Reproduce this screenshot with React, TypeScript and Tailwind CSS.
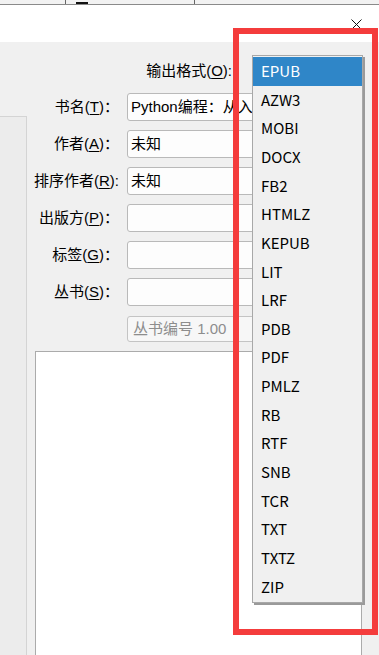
import React from 'react';

// --- DATA ---
const formats = [
  'EPUB', 'AZW3', 'MOBI', 'DOCX', 'FB2', 'HTMLZ', 'KEPUB', 'LIT', 'LRF', 'PDB',
  'PDF', 'PMLZ', 'RB', 'RTF', 'SNB', 'TCR', 'TXT', 'TXTZ', 'ZIP',
];

// only the part of each value that shows left of the open list
const fields = [
  { label: '书名', key: 'T', colon: '：', value: 'Python编程：从入' },
  { label: '作者', key: 'A', colon: '：', value: '未知' },
  { label: '排序作者', key: 'R', colon: ':', value: '未知' },
  { label: '出版方', key: 'P', colon: '：', value: '' },
  { label: '标签', key: 'G', colon: '：', value: '' },
  { label: '丛书', key: 'S', colon: '：', value: '' },
];

const uiFont = { fontFamily: '"Liberation Sans", "Noto Sans CJK SC", sans-serif' };
const listFont = { fontFamily: '"Noto Sans CJK SC", "Noto Sans", sans-serif' };

function Label({ text, k, colon }: { text: string; k: string; colon: string }) {
  return (
    <span className="whitespace-nowrap">
      {text}(<span className="underline underline-offset-2">{k}</span>){colon}
    </span>
  );
}

export default function App() {
  return (
    <div
      className="relative w-[379px] h-[655px] overflow-hidden bg-[#f0f0f0] text-[15px] text-black"
      style={uiFont}
    >
      {/* window behind: thin strip */}
      <div className="h-[5px] bg-[#f2f2f2] border-b border-[#8a8a8a] flex items-end">
        <div className="ml-[65px] w-px h-[4px] bg-[#666]"></div>
        <div className="ml-[10px] w-[12px] h-[2px] bg-[#111]"></div>
        <div className="ml-[106px] w-px h-[4px] bg-[#666]"></div>
      </div>

      {/* title bar */}
      <div className="h-[37px] bg-white flex justify-end items-center pr-[17px]">
        <svg width="11" height="11" viewBox="0 0 11 11" className="mt-[2px]">
          <path d="M0.5 0.5 L10.5 10.5 M10.5 0.5 L0.5 10.5" stroke="#111" strokeWidth="1" fill="none" />
        </svg>
      </div>

      {/* body */}
      <div className="flex">
        <div className="w-[27px] mt-[74px] h-[600px] bg-[#ececec] border-t border-r border-[#d4d4d4] shrink-0"></div>

        <div className="w-[335px] pt-[15px]">
          {/* output format */}
          <div className="flex items-center justify-end gap-[20px] h-[28px]">
            <Label text="输出格式" k="O" colon=":" />
            <div className="w-[110px] h-[28px] border border-[#b9b9b9] rounded-[3px] bg-[#fdfdfd]"></div>
          </div>

          {/* fields */}
          <div className="grid grid-cols-[92px_1fr] gap-x-[8px] gap-y-[9px] mt-[8px]">
            {fields.map((f) => (
              <React.Fragment key={f.key}>
                <div className="flex items-center justify-end h-[28px]">
                  <Label text={f.label} k={f.key} colon={f.colon} />
                </div>
                <div className="h-[28px] border border-[#b9b9b9] rounded-[3px] bg-[#fdfdfd] flex items-center pl-[3px] whitespace-nowrap">
                  {f.value}
                </div>
              </React.Fragment>
            ))}
            <div></div>
            <div className="h-[26px] mt-[1px] border border-[#c4c4c4] rounded-[3px] bg-[#f7f7f7] flex items-center pl-[5px] text-[#8d8d8d] whitespace-nowrap">
              丛书编号 1.00
            </div>
          </div>

          {/* comments box */}
          <div className="ml-[8px] mt-[9px] h-[320px] bg-white border border-[#ababab]"></div>
        </div>
      </div>

      {/* dropdown list */}
      <div
        className="absolute left-[252px] top-[55px] w-[111px] bg-[#f0f0f0] border border-[#a8a8a8] shadow-[2px_2px_0_#9a9a9a] py-px"
        style={listFont}
      >
        {formats.map((f, i) => (
          <div
            key={f}
            className={
              i === 0
                ? 'h-[28.65px] flex items-center pl-[8px] bg-[#2f86c8] text-white'
                : 'h-[28.65px] flex items-center pl-[8px]'
            }
          >
            {f}
          </div>
        ))}
      </div>

      {/* annotation */}
      <div className="absolute left-[233px] top-[28px] w-[145px] h-[607px] border-[6px] border-[#f43c3c]"></div>
    </div>
  );
}
